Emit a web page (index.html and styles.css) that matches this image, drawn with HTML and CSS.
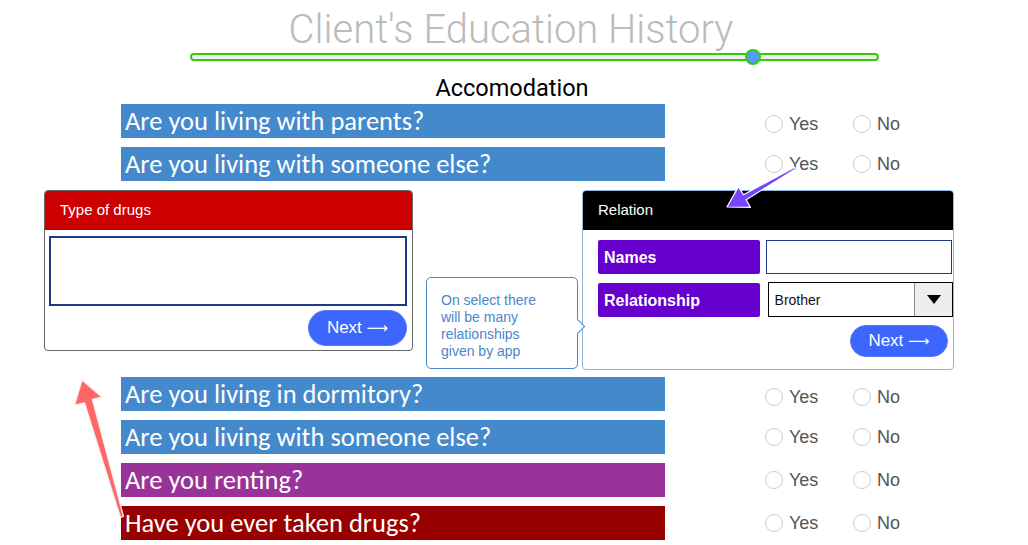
FILE: index.html
```html
<!DOCTYPE html>
<html>
<head>
<meta charset="utf-8">
<link rel="stylesheet" href="styles.css">
</head>
<body>
<div class="page">
  <h1 class="title">Client's Education History</h1>
  <div class="slider">
    <div class="track"></div>
    <div class="thumb"></div>
  </div>
  <h2 class="section">Accomodation</h2>

  <div class="row">
    <div class="q q-blue">Are you living with parents?</div>
    <div class="radios low">
      <label class="radio"><span class="dot"></span>Yes</label>
      <label class="radio"><span class="dot"></span>No</label>
    </div>
  </div>
  <div class="row">
    <div class="q q-blue">Are you living with someone else?</div>
    <div class="radios">
      <label class="radio"><span class="dot"></span>Yes</label>
      <label class="radio"><span class="dot"></span>No</label>
    </div>
  </div>

  <div class="middle">
    <div class="panel drugs">
      <div class="panel-head red">Type of drugs</div>
      <div class="drugs-body">
        <div class="textarea"></div>
        <button class="next">Next <span class="arr">⟶</span></button>
      </div>
    </div>
    <div class="callout">On select there will be many relationships given by app</div>
    <div class="panel relation">
      <div class="panel-head black">Relation</div>
      <div class="rel-body">
        <div class="field">
          <div class="flabel">Names</div>
          <div class="finput"></div>
        </div>
        <div class="field">
          <div class="flabel">Relationship</div>
          <div class="fselect"><span class="sval">Brother</span><span class="sarrow"></span></div>
        </div>
        <div class="rel-foot"><button class="next small">Next <span class="arr">⟶</span></button></div>
      </div>
    </div>
  </div>

  <div class="row">
    <div class="q q-blue">Are you living in dormitory?</div>
    <div class="radios low">
      <label class="radio"><span class="dot"></span>Yes</label>
      <label class="radio"><span class="dot"></span>No</label>
    </div>
  </div>
  <div class="row">
    <div class="q q-blue">Are you living with someone else?</div>
    <div class="radios">
      <label class="radio"><span class="dot"></span>Yes</label>
      <label class="radio"><span class="dot"></span>No</label>
    </div>
  </div>
  <div class="row">
    <div class="q q-purple">Are you renting?</div>
    <div class="radios">
      <label class="radio"><span class="dot"></span>Yes</label>
      <label class="radio"><span class="dot"></span>No</label>
    </div>
  </div>
  <div class="row">
    <div class="q q-red">Have you ever taken drugs?</div>
    <div class="radios">
      <label class="radio"><span class="dot"></span>Yes</label>
      <label class="radio"><span class="dot"></span>No</label>
    </div>
  </div>

  <svg class="arrows" width="1028" height="545" viewBox="0 0 1028 545">
    <polygon class="arrow-purple" points="794.5,167.1 743.5,194.8 738.4,186.6 727,207 750.4,207.4 746.2,199.8 795.5,168.9"/>
    <polygon class="arrow-red" points="123.5,516.5 92.3,399.4 101.7,397.0 82,380 74.7,405.0 84.5,402.8 120.5,517.5"/>
  </svg>
</div>
</body>
</html>
```

FILE: styles.css
```css
* { box-sizing: border-box; }
html, body { margin: 0; padding: 0; background: #fff; }
body { font-family: "Liberation Sans", Arial, sans-serif; }

.page {
  position: relative;
  width: 1028px;
  height: 545px;
  overflow: hidden;
}

.title {
  margin: 0;
  padding-top: 6px;
  height: 52px;
  line-height: 48px;
  text-align: center;
  font-family: Roboto, "Liberation Sans", sans-serif;
  font-weight: 300;
  font-size: 40px;
  color: #bbbbbb;
  padding-right: 6px;
  white-space: nowrap;
}

.slider {
  position: relative;
  margin: 1px 0 0 190px;
  width: 689px;
  height: 8px;
}
.track {
  height: 8px;
  border: 2px solid #33cc00;
  border-radius: 4px;
  background: #eeeeee;
}
.thumb {
  position: absolute;
  left: 555px;
  top: -4px;
  width: 16px;
  height: 16px;
  border-radius: 50%;
  background: #5599ff;
  border: 2px solid #33cc00;
}

.section {
  margin: 0;
  height: 43px;
  padding-top: 12px;
  line-height: 30px;
  text-align: center;
  font-family: Roboto, "Liberation Sans", sans-serif;
  font-weight: 400;
  font-size: 23.5px;
  color: #000;
  padding-right: 4px;
}

.row {
  display: flex;
  align-items: center;
  margin-left: 121px;
  height: 34px;
  margin-bottom: 9px;
}
.q {
  width: 544px;
  height: 34px;
  padding-left: 4px;
  line-height: 35px;
  color: #fff;
  font-family: Carlito, "Open Sans", Lato, sans-serif;
  font-size: 26.5px;
  white-space: nowrap;
  overflow: hidden;
}
.q-blue { background: #4589cd; }
.q-purple { background: #993399; }
.q-red { background: #990000; }

.radios {
  display: flex;
  margin-left: 100px;
}
.radios.low { margin-top: 6px; }
.radio {
  display: flex;
  align-items: center;
  width: 88px;
  font-family: "Liberation Sans", Arial, sans-serif;
  font-size: 18px;
  color: #555;
}
.dot {
  width: 18px;
  height: 18px;
  border: 1px solid #cccccc;
  border-radius: 50%;
  margin-right: 6px;
  background: #fff;
}

.middle {
  display: flex;
  align-items: flex-start;
  height: 187px;
  padding-left: 44px;
}

.panel {
  border-radius: 4px;
  overflow: hidden;
  background: #fff;
}
.panel-head {
  height: 39px;
  line-height: 38px;
  padding-left: 15px;
  color: #fff;
  font-size: 15px;
}
.red { background: #cc0000; border-bottom: 1px solid #333; }
.black { background: #000; }

.drugs {
  width: 369px;
  height: 161px;
  border: 1px solid #666;
}
.drugs-body {
  padding: 6px 5px 0 4px;
  display: flex;
  flex-direction: column;
  align-items: flex-end;
}
.textarea {
  width: 100%;
  height: 70px;
  border: 2px solid #1f3a85;
  background: #fff;
}
.next {
  margin-top: 4px;
  width: 99px;
  height: 36px;
  border: 1px solid #5577ee;
  border-radius: 18px;
  background: #3d66ff;
  color: #fff;
  font-family: "Liberation Sans", Arial, sans-serif;
  font-size: 17px;
  padding: 0;
}
.arr {
  font-family: "DejaVu Sans", sans-serif;
  font-size: 15px;
}
.next.small {
  width: 98px;
  height: 32px;
  border-radius: 16px;
  margin-top: 0;
}

.callout {
  position: relative;
  margin: 87px 0 0 13px;
  width: 152px;
  height: 92px;
  border: 1px solid #4a86c8;
  border-radius: 5px;
  padding: 14px 26px 0 14px;
  color: #4a86c8;
  font-size: 14px;
  line-height: 17px;
  background: #fff;
}
.callout::after {
  content: "";
  position: absolute;
  right: -6px;
  top: 43px;
  width: 10px;
  height: 10px;
  background: #fff;
  border-right: 1px solid #4a86c8;
  border-top: 1px solid #4a86c8;
  transform: rotate(45deg);
}

.relation {
  margin-left: 4px;
  width: 372px;
  height: 180px;
  border: 1px solid #8fb6de;
}
.rel-body {
  padding: 10px 0 0 15px;
}
.field {
  display: flex;
  align-items: center;
  margin-bottom: 8px;
}
.flabel {
  width: 162px;
  height: 34px;
  line-height: 36px;
  padding-left: 6px;
  border-radius: 2px;
  background: #6600cc;
  color: #fff;
  font-weight: bold;
  font-size: 16px;
}
.finput {
  margin-left: 6px;
  width: 186px;
  height: 34px;
  border: 1px solid #1f3a85;
}
.fselect {
  margin-left: 8px;
  width: 186px;
  height: 35px;
  border: 1px solid #000;
  display: flex;
}
.sval {
  flex: 1;
  line-height: 35px;
  padding-left: 6px;
  font-size: 14px;
  color: #111;
}
.sarrow {
  width: 38px;
  border-left: 1px solid #888;
  background: #eeeeee;
  position: relative;
}
.sarrow::after {
  content: "";
  position: absolute;
  left: 12px;
  top: 12px;
  border-left: 7px solid transparent;
  border-right: 7px solid transparent;
  border-top: 9px solid #000;
}
.rel-foot {
  display: flex;
  justify-content: flex-end;
  padding-right: 5px;
  margin-top: 3px;
}

.arrows {
  position: absolute;
  left: 0;
  top: 0;
  pointer-events: none;
}
.arrow-purple {
  fill: #7744ff;
  stroke: #ffffff;
  stroke-width: 1.2;
  stroke-linejoin: round;
}
.arrow-red {
  fill: #ff6666;
  stroke: #f0f0f0;
  stroke-width: 1.2;
  stroke-linejoin: round;
}
```
